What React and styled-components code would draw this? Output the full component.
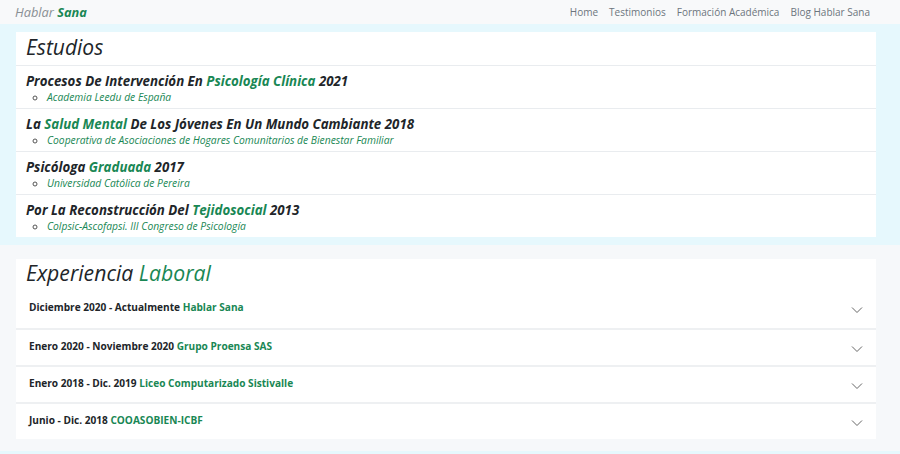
import React from 'react'
import styled, { createGlobalStyle } from 'styled-components'

const GlobalStyle = createGlobalStyle`
    body {
        margin: 0;
        font-family: "Open Sans", "Liberation Sans", sans-serif;
        background: #e6f8fd;
        color: #212529;
    }
`

const Nav = styled.nav`
    height: 24px;
    display: flex;
    align-items: center;
    justify-content: space-between;
    padding: 0 30px 0 15px;
    background: #f8f9fa;
`

const Brand = styled.div`
    font-size: 12.8px;
    font-style: italic;
    color: #8a8f94;
`

const Green = styled.span`
    color: #198754;
    font-weight: ${props => (props.bold ? 700 : 'inherit')};
`

const NavLinks = styled.div`
    display: flex;
    gap: 11px;
`

const NavLink = styled.span`
    font-size: 10px;
    color: #6c757d;
`

const Section = styled.section`
    background: ${props => props.bg};
    padding: ${props => props.pad};
`

const Card = styled.div`
    background: #fff;
    margin: 0 24px 0 16px;
`

const CardTitle = styled.h2`
    margin: 0;
    font-size: ${props => props.size};
    font-weight: 400;
    font-style: italic;
    height: ${props => props.h};
    line-height: ${props => props.lh};
    padding-left: 10px;
    box-sizing: border-box;
    border-bottom: ${props => (props.line ? '1px solid #e9ecef' : 'none')};
`

const Study = styled.div`
    height: 43px;
    padding: 7px 0 0 10px;
    box-sizing: border-box;
    border-bottom: 1px solid #e9ecef;
    &:last-child {
        height: 42px;
        border-bottom: none;
    }
`

const StudyTitle = styled.div`
    font-size: 13.3px;
    font-weight: 700;
    font-style: italic;
    line-height: 17px;
`

const SubList = styled.ul`
    margin: 0;
    padding-left: 21px;
    list-style: circle;
    font-size: 10.3px;
    font-style: italic;
    color: #198754;
    line-height: 14px;
    li::marker {
        color: #555;
    }
`

const Row = styled.div`
    height: 37px;
    display: flex;
    justify-content: space-between;
    padding: 9px 13px 0 13px;
    box-sizing: border-box;
    border-top: ${props => (props.first ? 'none' : '2px solid #eef0f2')};
`

const RowText = styled.span`
    font-size: 10.1px;
    font-weight: 700;
    line-height: 14px;
`

const Chevron = styled.svg`
    width: 12px;
    height: 8px;
    margin-top: 6px;
`

const studies = [
    ['Procesos De Intervención En ', 'Psicología Clínica', ' 2021', 'Academia Leedu de España'],
    ['La ', 'Salud Mental', ' De Los Jóvenes En Un Mundo Cambiante 2018', 'Cooperativa de Asociaciones de Hogares Comunitarios de Bienestar Familiar'],
    ['Psicóloga ', 'Graduada', ' 2017', 'Universidad Católica de Pereira'],
    ['Por La Reconstrucción Del ', 'Tejidosocial', ' 2013', 'Colpsic-Ascofapsi. III Congreso de Psicología'],
]

const jobs = [
    ['Diciembre 2020 - Actualmente ', 'Hablar Sana'],
    ['Enero 2020 - Noviembre 2020 ', 'Grupo Proensa SAS'],
    ['Enero 2018 - Dic. 2019 ', 'Liceo Computarizado Sistivalle'],
    ['Junio - Dic. 2018 ', 'COOASOBIEN-ICBF'],
]

export default function App() {
    return (
        <>
            <GlobalStyle />
            <Nav>
                <Brand>Hablar <Green bold>Sana</Green></Brand>
                <NavLinks>
                    <NavLink>Home</NavLink>
                    <NavLink>Testimonios</NavLink>
                    <NavLink>Formación Académica</NavLink>
                    <NavLink>Blog Hablar Sana</NavLink>
                </NavLinks>
            </Nav>
            <Section bg="#e6f8fd" pad="8px 0">
                <Card>
                    <CardTitle size="21px" h="34px" lh="30px" line>Estudios</CardTitle>
                    {studies.map(s => (
                        <Study key={s[1]}>
                            <StudyTitle>{s[0]}<Green>{s[1]}</Green>{s[2]}</StudyTitle>
                            <SubList><li>{s[3]}</li></SubList>
                        </Study>
                    ))}
                </Card>
            </Section>
            <Section bg="#f6f8fa" pad="14px 0 12px">
                <Card>
                    <CardTitle size="21.2px" h="32px" lh="28px">Experiencia <Green>Laboral</Green></CardTitle>
                    {jobs.map((j, i) => (
                        <Row key={j[1]} first={i === 0}>
                            <RowText>{j[0]}<Green>{j[1]}</Green></RowText>
                            <Chevron viewBox="0 0 12 8" fill="none" stroke="#666" strokeWidth="1">
                                <path d="M1 1.5l5 5 5-5" />
                            </Chevron>
                        </Row>
                    ))}
                </Card>
            </Section>
        </>
    )
}
